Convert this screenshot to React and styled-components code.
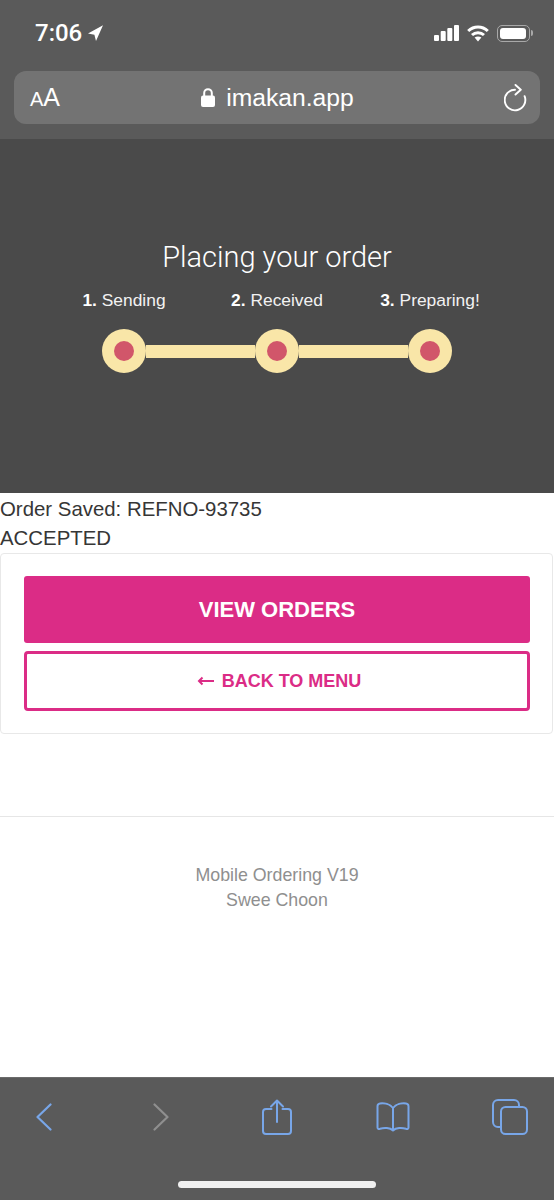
import styled, { createGlobalStyle } from "styled-components";

const GlobalStyle = createGlobalStyle`
  html, body {
    margin: 0;
    padding: 0;
    background: #fff;
  }
  * {
    box-sizing: border-box;
  }
`;

const App = () => {
  return (
    <Page>
      <GlobalStyle />
      <BrowserHeader>
        <StatusBar>
          <Clock>
            <Time>7:06</Time>
            <svg width="15" height="16" viewBox="0 0 15 16">
              <path d="M15 0.3 L8 16 L6.4 9.8 L0 8.6 Z" fill="#fff" />
            </svg>
          </Clock>
          <StatusIcons>
            <svg width="25" height="16" viewBox="0 0 25 16" fill="#fff">
              <rect x="0" y="10" width="5" height="6" rx="1" />
              <rect x="6.7" y="6" width="5" height="10" rx="1" />
              <rect x="13.3" y="3" width="5" height="13" rx="1" />
              <rect x="20" y="0" width="5" height="16" rx="1" />
            </svg>
            <svg width="22" height="17" viewBox="0 0 22 17" fill="none" stroke="#fff" strokeWidth="3">
              <path d="M1.2 6 C6.8 0.6 15.2 0.6 20.8 6" />
              <path d="M5 10 C8.4 6.9 13.6 6.9 17 10" />
              <path d="M7.6 12.6 L11 16.4 L14.4 12.6 C12.4 11 9.6 11 7.6 12.6 Z" fill="#fff" stroke="none" />
            </svg>
            <Battery>
              <BatteryFill />
            </Battery>
          </StatusIcons>
        </StatusBar>
        <UrlBar>
          <TextSize>
            <small>A</small>A
          </TextSize>
          <Address>
            <svg width="14" height="19" viewBox="0 0 14 19">
              <path d="M3.2 8 V5 a3.8 3.8 0 0 1 7.6 0 V8" fill="none" stroke="#fff" strokeWidth="2" />
              <rect x="0" y="7.5" width="14" height="11.5" rx="2" fill="#fff" />
            </svg>
            <span>imakan.app</span>
          </Address>
          <svg width="24" height="28" viewBox="0 0 24 28" fill="none" stroke="#fff" strokeWidth="1.9" strokeLinecap="round" strokeLinejoin="round">
            <path d="M11 5.7 A10.3 10.3 0 1 0 20.6 12.2" />
            <path d="M11.5 1 L16.8 5.7 L11.5 10.5" />
          </svg>
        </UrlBar>
      </BrowserHeader>

      <Hero>
        <HeroTitle>Placing your order</HeroTitle>
        <StepLabels>
          <StepLabel><b>1.</b> Sending</StepLabel>
          <StepLabel><b>2.</b> Received</StepLabel>
          <StepLabel><b>3.</b> Preparing!</StepLabel>
        </StepLabels>
        <Track>
          <Dot />
          <Connector />
          <Dot />
          <Connector />
          <Dot />
        </Track>
      </Hero>

      <Content>
        <Message>Order Saved: REFNO-93735</Message>
        <Message>ACCEPTED</Message>
        <Card>
          <PrimaryButton>VIEW ORDERS</PrimaryButton>
          <OutlineButton>
            <svg width="18" height="10" viewBox="0 0 18 10" fill="none" stroke="#db2c86" strokeWidth="2">
              <path d="M17 5 H2" />
              <path d="M5.5 1.5 L2 5 L5.5 8.5" />
            </svg>
            BACK TO MENU
          </OutlineButton>
        </Card>
        <Footer>
          <FooterLine>Mobile Ordering V19</FooterLine>
          <FooterLine>Swee Choon</FooterLine>
        </Footer>
      </Content>

      <Toolbar>
        <ToolRow>
          <ToolIcon>
            <svg width="16" height="28" viewBox="0 0 16 28" fill="none" stroke="#78a6e8" strokeWidth="2.2" strokeLinecap="round" strokeLinejoin="round">
              <path d="M14.5 1.5 L1.5 14 L14.5 26.5" />
            </svg>
          </ToolIcon>
          <ToolIcon>
            <svg width="16" height="28" viewBox="0 0 16 28" fill="none" stroke="#8f8f8f" strokeWidth="2.2" strokeLinecap="round" strokeLinejoin="round">
              <path d="M1.5 1.5 L14.5 14 L1.5 26.5" />
            </svg>
          </ToolIcon>
          <ToolIcon>
            <svg width="30" height="36" viewBox="0 0 30 36" fill="none" stroke="#78a6e8" strokeWidth="2" strokeLinecap="round" strokeLinejoin="round">
              <path d="M9.5 10 H4 a3 3 0 0 0 -3 3 V32 a3 3 0 0 0 3 3 H26 a3 3 0 0 0 3 -3 V13 a3 3 0 0 0 -3 -3 H20.5" />
              <path d="M15 23 V2" />
              <path d="M9 7.5 L15 1.5 L21 7.5" />
            </svg>
          </ToolIcon>
          <ToolIcon>
            <svg width="34" height="30" viewBox="0 0 34 30" fill="none" stroke="#78a6e8" strokeWidth="2" strokeLinecap="round" strokeLinejoin="round">
              <path d="M17 6 C14 2 8 1 4 1.5 C2.5 1.7 1.5 2.8 1.5 4.2 V25.5 C1.5 26.8 2.5 27.2 4 26.8 C8 25.6 14 25.6 17 28.5 C20 25.6 26 25.6 30 26.8 C31.5 27.2 32.5 26.8 32.5 25.5 V4.2 C32.5 2.8 31.5 1.7 30 1.5 C26 1 20 2 17 6 Z" />
              <path d="M17 6 V28" />
            </svg>
          </ToolIcon>
          <ToolIcon>
            <svg width="36" height="36" viewBox="0 0 36 36" fill="none" stroke="#78a6e8" strokeWidth="2">
              <path d="M8 28 H6 a5 5 0 0 1 -5 -5 V6 a5 5 0 0 1 5 -5 H22 a5 5 0 0 1 5 5 V8" />
              <rect x="9" y="8" width="26" height="27" rx="4.5" />
            </svg>
          </ToolIcon>
        </ToolRow>
        <HomeIndicator />
      </Toolbar>
    </Page>
  );
};

export default App;

const Page = styled.div`
  width: 554px;
  height: 1200px;
  display: flex;
  flex-direction: column;
  overflow: hidden;
  background: #fff;
  font-family: "Liberation Sans", Arial, sans-serif;
`;

const BrowserHeader = styled.header`
  height: 139px;
  background: #5a5a5a;
  padding: 0 14px;
  color: #fff;
`;

const StatusBar = styled.div`
  height: 71px;
  display: flex;
  justify-content: space-between;
  align-items: center;
  padding: 0 7px 5px 21px;
`;

const Clock = styled.div`
  display: flex;
  align-items: center;
  gap: 6px;
`;

const Time = styled.span`
  font-family: Roboto, "Liberation Sans", sans-serif;
  font-weight: 500;
  font-size: 24px;
`;

const StatusIcons = styled.div`
  display: flex;
  align-items: center;
  gap: 8px;
`;

const Battery = styled.div`
  width: 33px;
  height: 17px;
  padding: 2px;
  margin-right: 3px;
  border: 1.5px solid #a8a8a8;
  border-radius: 5px;
  position: relative;
  &::after {
    content: "";
    position: absolute;
    right: -4px;
    top: 4px;
    width: 2px;
    height: 6px;
    border-radius: 0 2px 2px 0;
    background: #a8a8a8;
  }
`;

const BatteryFill = styled.div`
  height: 100%;
  width: 26px;
  border-radius: 3px;
  background: #fff;
`;

const UrlBar = styled.div`
  height: 53px;
  display: flex;
  align-items: center;
  justify-content: space-between;
  padding: 0 12px 0 16px;
  background: #737373;
  border-radius: 12px;
`;

const TextSize = styled.div`
  width: 30px;
  font-size: 25px;
  line-height: 30px;
  small {
    font-size: 20px;
  }
`;

const Address = styled.div`
  display: flex;
  align-items: center;
  gap: 11px;
  font-size: 24.7px;
  margin-left: -9px;
`;

const Hero = styled.section`
  height: 354px;
  background: #4a4a4a;
  color: #fff;
  display: flex;
  flex-direction: column;
  align-items: center;
  padding-top: 100px;
`;

const HeroTitle = styled.h1`
  margin: 0;
  font-family: Roboto, "Liberation Sans", sans-serif;
  font-weight: 300;
  font-size: 29px;
  line-height: 36px;
`;

const StepLabels = styled.div`
  display: grid;
  grid-template-columns: repeat(3, 153px);
  margin-top: 14px;
`;

const StepLabel = styled.div`
  text-align: center;
  font-size: 17.4px;
  line-height: 22px;
  color: #f2f2f2;
  b {
    color: #fff;
  }
`;

const Track = styled.div`
  display: flex;
  align-items: center;
  margin-top: 18px;
`;

const Dot = styled.div`
  width: 44px;
  height: 44px;
  border-radius: 50%;
  background: #f9e6a8;
  display: flex;
  align-items: center;
  justify-content: center;
  &::before {
    content: "";
    width: 20px;
    height: 20px;
    border-radius: 50%;
    background: #d1566a;
  }
`;

const Connector = styled.div`
  width: 109px;
  height: 13px;
  background: #f9e6a8;
`;

const Content = styled.main`
  flex: 1;
  min-height: 0;
  color: #363636;
  display: flex;
  flex-direction: column;
`;

const Message = styled.div`
  font-size: 20.4px;
  line-height: 29px;
  &:first-child {
    margin-top: 2px;
  }
`;

const Card = styled.div`
  width: 553px;
  height: 181px;
  padding: 22px 22px 22px 23px;
  border: 1px solid #e8e8e8;
  border-radius: 4px;
  display: flex;
  flex-direction: column;
  gap: 8px;
`;

const PrimaryButton = styled.div`
  height: 67px;
  padding-top: 1px;
  display: flex;
  align-items: center;
  justify-content: center;
  background: #db2c86;
  border-radius: 3px;
  color: #fff;
  font-size: 22px;
  font-weight: 700;
`;

const OutlineButton = styled.div`
  height: 60px;
  padding-left: 4px;
  display: flex;
  align-items: center;
  justify-content: center;
  gap: 7px;
  border: 3px solid #db2c86;
  border-radius: 4px;
  color: #db2c86;
  font-size: 18px;
  font-weight: 700;
`;

const Footer = styled.footer`
  margin-top: 82px;
  border-top: 1px solid #e6e6e6;
  padding-top: 46px;
  text-align: center;
  color: #8f8f8f;
`;

const FooterLine = styled.div`
  font-size: 17.8px;
  line-height: 25px;
`;

const Toolbar = styled.nav`
  height: 123px;
  background: #5a5a5a;
  border-top: 1px solid #6b6b6b;
`;

const ToolRow = styled.div`
  width: 582px;
  height: 103px;
  margin-left: -14px;
  display: grid;
  grid-template-columns: repeat(5, 1fr);
  padding-bottom: 26px;
`;

const ToolIcon = styled.div`
  display: flex;
  align-items: center;
  justify-content: center;
`;

const HomeIndicator = styled.div`
  width: 198px;
  height: 7px;
  margin: 0 auto;
  border-radius: 4px;
  background: #f0f0f0;
`;
